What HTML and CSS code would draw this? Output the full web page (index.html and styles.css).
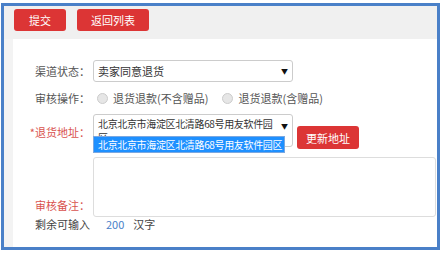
FILE: index.html
```html
<!DOCTYPE html>
<html lang="zh">

<head>
    <meta charset="utf-8">
    <title>审核退货</title>
    <link rel="stylesheet" href="styles.css">
</head>

<body>
    <div class="frame">
        <div class="toolbar">
            <button class="btn">提交</button>
            <button class="btn">返回列表</button>
        </div>
        <div class="content">
            <div class="panel">
                <div class="row">
                    <label class="label">渠道状态：</label>
                    <div class="select">
                        <span>卖家同意退货</span>
                        <span class="arrow">▼</span>
                    </div>
                </div>
                <div class="row row-radio">
                    <label class="label">审核操作：</label>
                    <span class="radio"></span><span class="radio-text">退货退款(不含赠品)</span>
                    <span class="radio"></span><span class="radio-text">退货退款(含赠品)</span>
                </div>
                <div class="row row-address">
                    <label class="label red">*退货地址：</label>
                    <div class="address">
                        <div class="select select-tall">
                            <span class="address-text">北京北京市海淀区北清路68号用友软件园区</span>
                            <span class="arrow">▼</span>
                        </div>
                        <ul class="options">
                            <li class="option-on">北京北京市海淀区北清路68号用友软件园区</li>
                        </ul>
                    </div>
                    <button class="btn btn-small">更新地址</button>
                </div>
                <div class="row row-note">
                    <label class="label red">审核备注：</label>
                    <div class="textarea"></div>
                </div>
                <div class="row row-count">
                    <span class="count-label">剩余可输入</span>
                    <span class="count">200</span>
                    <span>汉字</span>
                </div>
            </div>
        </div>
    </div>
</body>

</html>
```

FILE: styles.css
```css
body {
    margin: 0;
    font-family: "Noto Sans CJK SC", "Liberation Sans", sans-serif;
    font-size: 11px;
    color: #555;
}

.frame {
    margin: 3px 5px 3px 1px;
    height: 241px;
    border: 3px solid #4a80c8;
    display: flex;
    flex-direction: column;
    overflow: hidden;
}

.toolbar {
    flex-shrink: 0;
    background-color: #f0f0f0;
    height: 33px;
    padding: 3px 0 0 10px;
    box-sizing: border-box;
    display: flex;
    gap: 11px;
    align-items: flex-start;
}

.btn {
    background-color: #dc3535;
    color: #fff;
    border: none;
    border-radius: 3px;
    height: 22px;
    padding: 0 14px;
    font-family: inherit;
    font-size: 11px;
}

.toolbar .btn:first-child {
    width: 52px;
}

.content {
    flex: 1;
    background-color: #f3f3f3;
    padding-left: 9px;
    display: flex;
}

.panel {
    flex: 1;
    background-color: #fff;
    padding-top: 21px;
}

.row {
    display: flex;
    align-items: center;
}

.label {
    width: 80px;
    padding-right: 3px;
    text-align: right;
    box-sizing: border-box;
}

.red {
    color: #d9534f;
}

.select {
    width: 200px;
    height: 22px;
    box-sizing: border-box;
    border: 1px solid #ccc;
    border-radius: 3px;
    padding: 0 4px;
    display: flex;
    align-items: center;
    justify-content: space-between;
    color: #333;
}

.arrow {
    font-size: 7px;
    color: #111;
}

.row-radio {
    margin-top: 8px;
}

.radio {
    width: 9px;
    height: 9px;
    border-radius: 50%;
    border: 1px solid #ccc;
    background-color: #e6e6e6;
    margin: 0 5px 0 4px;
}

.radio-text {
    margin-right: 10px;
}

.row-address {
    margin-top: 8px;
    align-items: flex-start;
}

.row-address .label {
    align-self: center;
}

.address {
    position: relative;
}

.select-tall {
    height: 33px;
    align-items: flex-start;
    padding-top: 2px;
    overflow: hidden;
}

.address-text {
    width: 178px;
    font-size: 10px;
    letter-spacing: -0.35px;
    line-height: 14px;
}

.select-tall .arrow {
    margin-top: 4px;
}

.options {
    position: absolute;
    top: 22px;
    left: 0;
    width: 190px;
    margin: 0;
    padding: 0;
    list-style: none;
    border: 1px solid #7aa7e0;
}

.option-on {
    background-color: #1e90ff;
    color: #fff;
    font-size: 10px;
    letter-spacing: -0.35px;
    white-space: nowrap;
    line-height: 15px;
    padding-left: 4px;
}

.btn-small {
    margin: 12px 0 0 4px;
    padding: 0 9px;
    height: 23px;
}

.row-note {
    margin-top: 8px;
    align-items: flex-end;
}

.row-note .label {
    margin-bottom: 4px;
}

.textarea {
    width: 343px;
    height: 60px;
    box-sizing: border-box;
    border: 1px solid #ddd;
    border-radius: 3px;
}

.row-count {
    padding-left: 22px;
    height: 14px;
    color: #444;
}

.count {
    color: #4a80c8;
    margin: 0 9px 0 16px;
}
```
